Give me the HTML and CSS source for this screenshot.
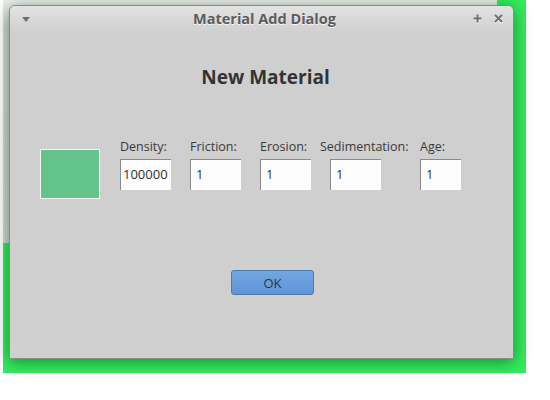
FILE: index.html
```html
<!DOCTYPE html>
<html>
<head>
<meta charset="utf-8">
<link rel="stylesheet" href="styles.css">
</head>
<body>
<div class="desktop">
  <div class="green-bg"></div>
  <div class="back-window"></div>
  <div class="dialog">
    <div class="titlebar">
      <svg class="tb-menu" width="8" height="5" viewBox="0 0 8 5"><path d="M0 0H8L4 5Z" fill="#6f6f6f"/></svg>
      <div class="tb-title">Material Add Dialog</div>
      <svg class="tb-btn" width="9" height="10" viewBox="0 0 9 10"><path d="M4.5 0.5V8.5M0.5 4.5H8.5" stroke="#fff" stroke-width="2" transform="translate(0,1)"/><path d="M4.5 0.5V8.5M0.5 4.5H8.5" stroke="#707070" stroke-width="2"/></svg>
      <svg class="tb-btn" width="9" height="10" viewBox="0 0 9 10"><path d="M1 1L8 8M8 1L1 8" stroke="#fff" stroke-width="2" transform="translate(0,1)"/><path d="M1 1L8 8M8 1L1 8" stroke="#707070" stroke-width="2"/></svg>
    </div>
    <div class="content">
      <h1 class="heading">New Material</h1>
      <div class="form-row">
        <div class="swatch"></div>
        <div class="fields">
          <div class="field f-density"><label>Density:</label><div class="input">100000</div></div>
          <div class="field f-friction"><label>Friction:</label><div class="input">1</div></div>
          <div class="field f-erosion"><label>Erosion:</label><div class="input">1</div></div>
          <div class="field f-sed"><label>Sedimentation:</label><div class="input">1</div></div>
          <div class="field f-age"><label>Age:</label><div class="input">1</div></div>
        </div>
      </div>
      <button class="ok-btn">OK</button>
    </div>
  </div>
</div>
</body>
</html>
```

FILE: styles.css
```css
html, body {
  margin: 0;
  padding: 0;
  background: #ffffff;
}
.desktop {
  position: relative;
  width: 550px;
  height: 400px;
  overflow: hidden;
  font-family: "Open Sans", "DejaVu Sans", sans-serif;
}
.green-bg {
  position: absolute;
  left: 3px;
  top: 0;
  width: 523px;
  height: 373px;
  background: #33ec5c;
}
.back-window {
  position: absolute;
  left: 3px;
  top: 0;
  width: 494px;
  height: 243px;
  background: linear-gradient(#eeeeee, #d8d8d8 30px, #d6d6d6);
}
.dialog {
  position: absolute;
  left: 9px;
  top: 5px;
  width: 503px;
  height: 352px;
  border: 1px solid #8a8a8a;
  border-radius: 6px 6px 0 0;
  background: #cfcfcf;
  box-shadow: 0 3px 16px rgba(0, 60, 10, 0.55);
  display: flex;
  flex-direction: column;
}
.titlebar {
  height: 25px;
  display: flex;
  align-items: center;
  padding: 0 10px 0 12px;
  border-radius: 5px 5px 0 0;
  background: linear-gradient(#e3e3e3, #d0d0d0);
}
.tb-menu {
  margin-top: 1px;
}
.tb-title {
  flex: 1;
  text-align: center;
  font-weight: bold;
  font-size: 14.5px;
  color: #5c5c5c;
  text-shadow: 0 1px 0 #f4f4f4;
  padding-left: 38px;
}
.tb-btn {
  margin-left: 12px;
}
.content {
  display: flex;
  flex-direction: column;
}
.heading {
  margin: 33px 0 0 0;
  padding-left: 8px;
  text-align: center;
  font-size: 19px;
  line-height: 26px;
  font-weight: bold;
  color: #333333;
}
.form-row {
  display: flex;
  align-items: flex-start;
  margin-top: 48px;
  padding-left: 30px;
}
.swatch {
  width: 58px;
  height: 48px;
  border: 1px solid #f4f4f4;
  background: #64c38a;
  margin-top: 11px;
}
.fields {
  display: grid;
  grid-template-columns: 70px 70px 60px 100px auto;
  margin-left: 20px;
}
.field {
  display: flex;
  flex-direction: column;
  align-items: flex-start;
}
.field label {
  font-size: 12.5px;
  line-height: 18px;
  color: #3a3a3a;
  white-space: nowrap;
  margin-bottom: 3px;
}
.input {
  box-sizing: border-box;
  width: 51px;
  height: 31px;
  background: #fdfdfd;
  border-top: 1px solid #8a8a8a;
  border-left: 1px solid #8a8a8a;
  font-size: 13px;
  line-height: 29px;
  padding-left: 3px;
  color: #2e2e2e;
}
.f-density .input {
  padding-left: 2px;
}
.f-friction .input,
.f-erosion .input,
.f-sed .input,
.f-age .input {
  padding-left: 5px;
}
.f-sed .input {
  margin-left: 10px;
}
.f-age .input {
  width: 41px;
}
.ok-btn {
  align-self: flex-start;
  margin: 71px 0 0 221px;
  width: 83px;
  height: 25px;
  border: 1px solid #5178a8;
  border-radius: 3px;
  background: linear-gradient(#72a6e2, #5e95d8);
  font-family: "Open Sans", "DejaVu Sans", sans-serif;
  font-size: 13px;
  color: #333333;
  padding: 0;
}
```
